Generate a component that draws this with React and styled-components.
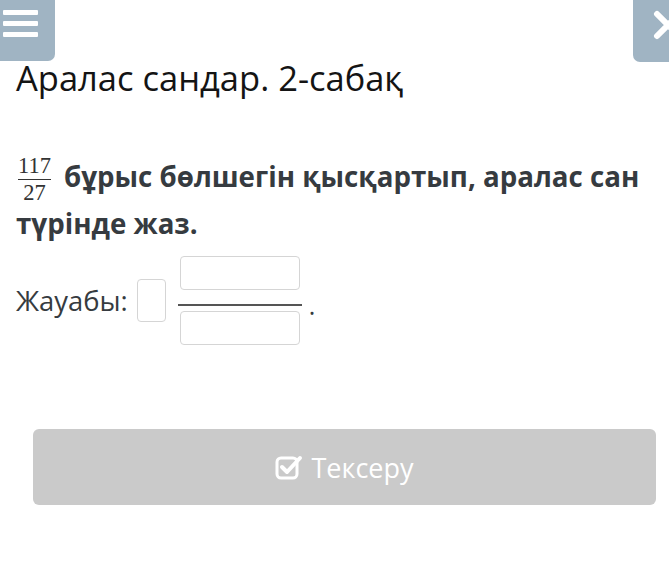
import React from 'react';
import styled, { createGlobalStyle } from 'styled-components';

const GlobalStyle = createGlobalStyle`
  html, body {
    margin: 0;
    padding: 0;
    background: #fff;
    font-family: "Open Sans", "Liberation Sans", sans-serif;
  }
`;

const Page = styled.div`
  position: relative;
  width: 669px;
  height: 568px;
  overflow: hidden;
  background: #fff;
`;

const TopBar = styled.div`
  display: flex;
  justify-content: space-between;
  height: 62px;
`;

const MenuButton = styled.div`
  width: 55px;
  height: 61px;
  background: #a0b4c3;
  border-bottom-right-radius: 7px;
  display: flex;
  flex-direction: column;
  gap: 6px;
  padding: 10px 0 0 3px;
  box-sizing: border-box;
`;

const MenuLine = styled.div`
  width: 35px;
  height: 5px;
  background: #fff;
  border-radius: 1px;
`;

const CloseButton = styled.div`
  width: 36px;
  height: 62px;
  background: #a0b4c3;
  border-bottom-left-radius: 7px;
  overflow: hidden;
`;

const Title = styled.h1`
  margin: 0;
  margin-top: -4px;
  padding-left: 16px;
  font-weight: 400;
  font-size: 34.5px;
  line-height: 40px;
  color: #141414;
`;

const Question = styled.div`
  margin-top: 56px;
  padding: 0 16px;
  font-weight: 700;
  font-size: 27.7px;
  line-height: 44px;
  color: #363b40;
`;

const Frac = styled.span`
  display: inline-flex;
  flex-direction: column;
  align-items: center;
  vertical-align: middle;
  margin: -4px 13px -4px 2px;
  font-family: "Liberation Serif", "DejaVu Serif", serif;
  font-weight: 400;
  font-size: 22.5px;
  line-height: 26px;
  color: #333;
`;

const FracNum = styled.span`
  display: block;
  height: 24px;
  line-height: 24px;
  overflow: visible;
`;

const FracBar = styled.span`
  align-self: stretch;
  height: 1.5px;
  background: #333;
  margin: 1px 0;
`;

const AnswerRow = styled.div`
  display: flex;
  align-items: center;
  margin-top: 11px;
  padding-left: 16px;
  font-size: 27.4px;
  color: #363b40;
`;

const Box = styled.div`
  box-sizing: border-box;
  width: ${p => p.$w}px;
  height: ${p => p.$h}px;
  border: 1px solid #d5d5d5;
  border-radius: 4px;
  background: #fff;
`;

const Whole = styled(Box)`
  margin-left: 9px;
  margin-right: 12px;
`;

const BigFrac = styled.div`
  display: flex;
  flex-direction: column;
  align-items: center;
  width: 124px;
`;

const BigBar = styled.div`
  align-self: stretch;
  height: 2px;
  background: #555;
  margin: 14px 0 5px;
`;

const Dot = styled.span`
  margin: 0 0 0 7px;
  font-size: 25px;
  line-height: 1;
  padding-top: 10px;
`;

const CheckButton = styled.div`
  margin: 84px 13px 0 33px;
  height: 76px;
  background: #cacaca;
  border-radius: 6px;
  display: flex;
  align-items: center;
  justify-content: center;
  gap: 8px;
  color: #fff;
  font-size: 27px;
`;

export default function App() {
  return (
    <Page>
      <GlobalStyle />
      <TopBar>
        <MenuButton>
          <MenuLine />
          <MenuLine />
          <MenuLine />
        </MenuButton>
        <CloseButton>
          <svg width="36" height="62" viewBox="0 0 36 62">
            <path d="M24 14 L46 36 M24 36 L46 14" fill="none" stroke="#fff" strokeWidth="6" strokeLinecap="round" />
          </svg>
        </CloseButton>
      </TopBar>
      <Title>Аралас сандар. 2-сабақ</Title>
      <Question>
        <Frac>
          <FracNum>117</FracNum>
          <FracBar />
          <FracNum>27</FracNum>
        </Frac>
        <span>бұрыс бөлшегін қысқартып, аралас сан түрінде жаз.</span>
      </Question>
      <AnswerRow>
        Жауабы:
        <Whole $w={29} $h={43} />
        <BigFrac>
          <Box $w={120} $h={34} />
          <BigBar />
          <Box $w={120} $h={34} />
        </BigFrac>
        <Dot>.</Dot>
      </AnswerRow>
      <CheckButton>
        <svg width="28" height="26" viewBox="0 0 28 26">
          <rect x="2" y="4" width="20" height="20" rx="4" fill="none" stroke="#fff" strokeWidth="3" />
          <path d="M7 13 L12 18 L25 4" fill="none" stroke="#fff" strokeWidth="4" strokeLinecap="round" strokeLinejoin="round" />
        </svg>
        Тексеру
      </CheckButton>
    </Page>
  );
}
